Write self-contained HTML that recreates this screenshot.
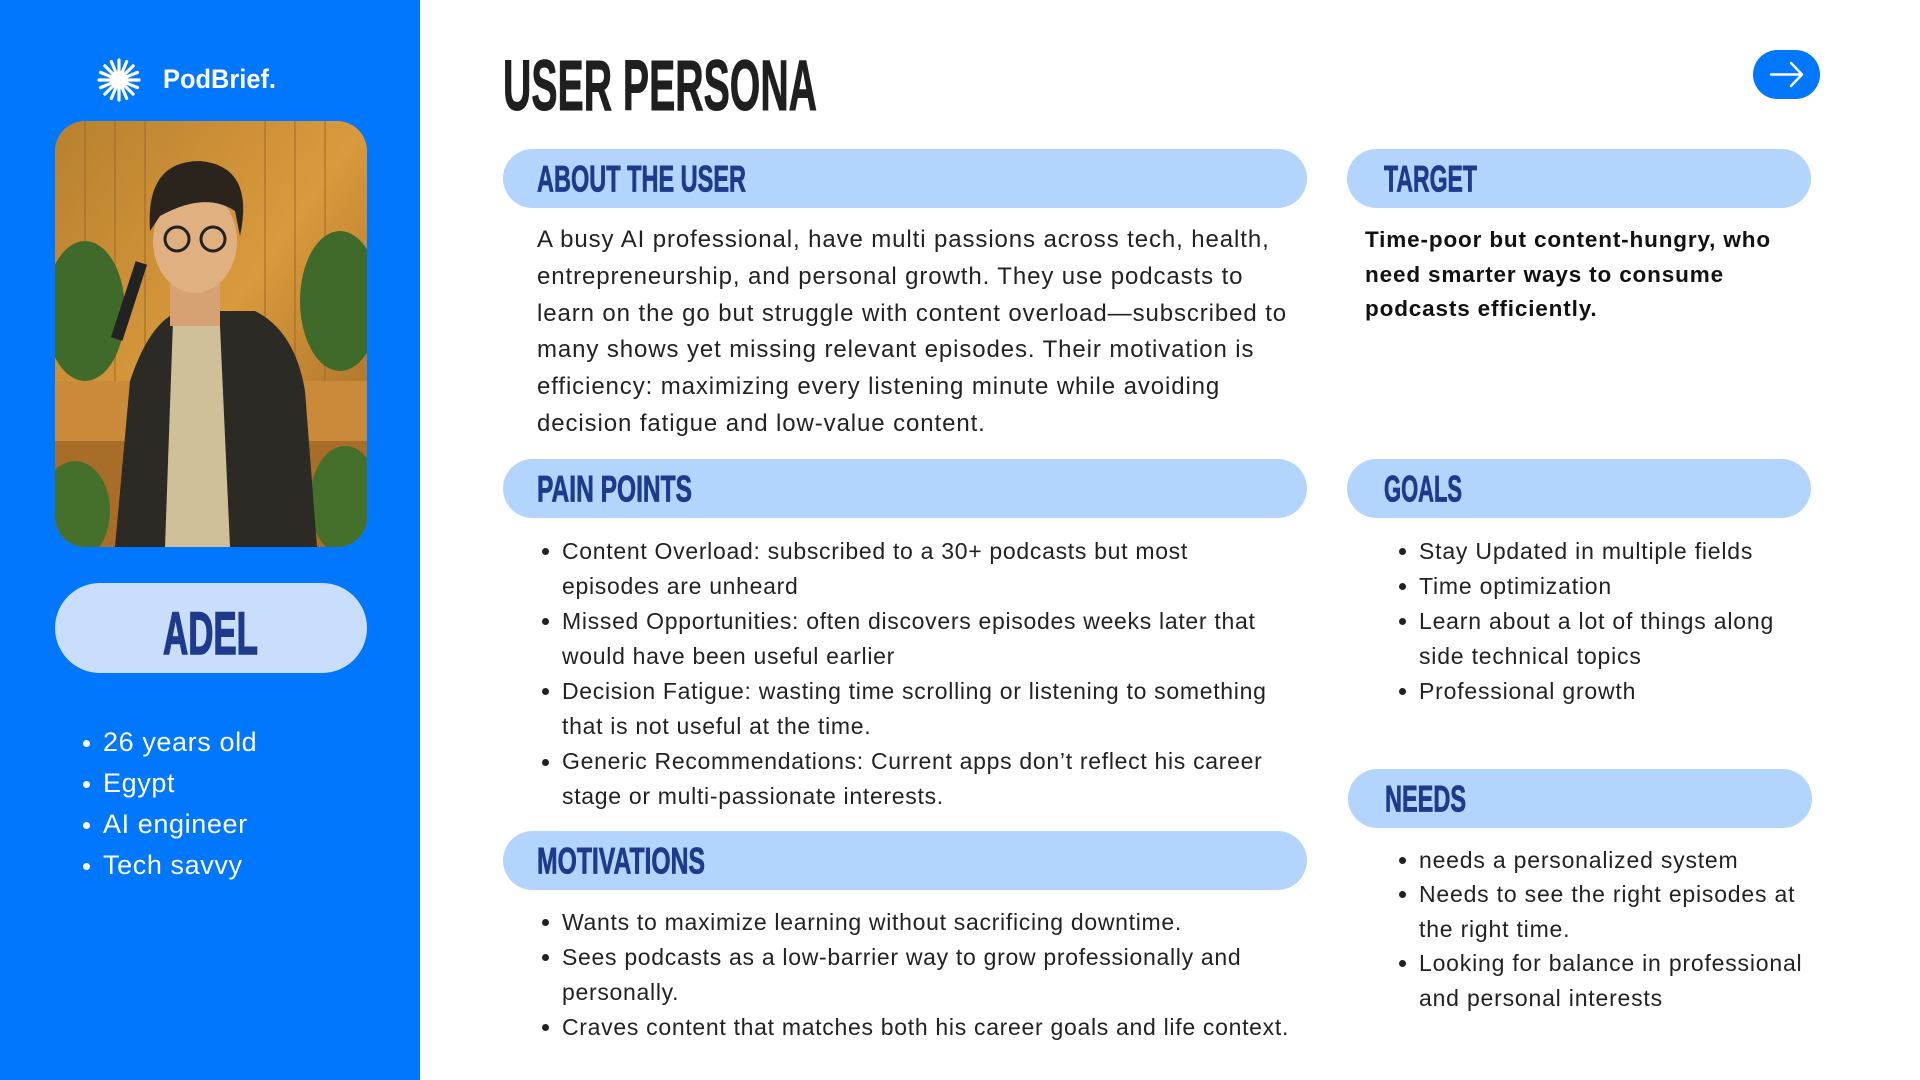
<!DOCTYPE html>
<html><head><meta charset="utf-8"><style>
*{margin:0;padding:0;box-sizing:border-box}
body{width:1920px;height:1080px;position:relative;background:#fff;overflow:hidden;font-family:"Liberation Sans",sans-serif;color:#1c1c1c}
.side{position:absolute;left:0;top:0;width:420px;height:1080px;background:#0077fd}
.abs{position:absolute}
.pill{position:absolute;height:59px;border-radius:30px;background:#b3d5fd}
.txt{position:absolute;white-space:nowrap}
ul{list-style:none}
li{position:relative}
li::before{content:"";position:absolute;left:-20px;top:50%;width:7px;height:7px;border-radius:50%;background:currentColor;margin-top:-3px}
li.c::before{display:none}
</style></head><body>
<div class="side"></div>
<svg class="abs" style="left:97px;top:58px" width="44" height="44" viewBox="-22 -22 44 44">
<g stroke="#fff" stroke-width="3.2" stroke-linecap="round">
<line x1="0" y1="-8" x2="0" y2="-20"/><line x1="0" y1="-8" x2="0" y2="-20" transform="rotate(22.5)"/><line x1="0" y1="-8" x2="0" y2="-20" transform="rotate(45)"/><line x1="0" y1="-8" x2="0" y2="-20" transform="rotate(67.5)"/><line x1="0" y1="-8" x2="0" y2="-20" transform="rotate(90)"/><line x1="0" y1="-8" x2="0" y2="-20" transform="rotate(112.5)"/><line x1="0" y1="-8" x2="0" y2="-20" transform="rotate(135)"/><line x1="0" y1="-8" x2="0" y2="-20" transform="rotate(157.5)"/><line x1="0" y1="-8" x2="0" y2="-20" transform="rotate(180)"/><line x1="0" y1="-8" x2="0" y2="-20" transform="rotate(202.5)"/><line x1="0" y1="-8" x2="0" y2="-20" transform="rotate(225)"/><line x1="0" y1="-8" x2="0" y2="-20" transform="rotate(247.5)"/><line x1="0" y1="-8" x2="0" y2="-20" transform="rotate(270)"/><line x1="0" y1="-8" x2="0" y2="-20" transform="rotate(292.5)"/><line x1="0" y1="-8" x2="0" y2="-20" transform="rotate(315)"/><line x1="0" y1="-8" x2="0" y2="-20" transform="rotate(337.5)"/>
</g><circle r="9" fill="#fff"/></svg>
<svg class="abs" style="left:0;top:0" width="420" height="700">
<text x="163" y="88" font-family="Liberation Sans" font-weight="bold" font-size="27" fill="#fff" textLength="113" lengthAdjust="spacingAndGlyphs">PodBrief.</text>
</svg>
<svg class="abs" style="left:55px;top:121px;border-radius:30px" width="312" height="426" viewBox="0 0 312 426">
<defs><linearGradient id="bg" x1="0" y1="0" x2="1" y2="1"><stop offset="0" stop-color="#b8802f"/><stop offset=".5" stop-color="#d99a3c"/><stop offset="1" stop-color="#9a6424"/></linearGradient></defs>
<rect width="312" height="426" fill="url(#bg)"/>
<g stroke="#a06a28" stroke-width="2" opacity=".5"><line x1="30" y1="0" x2="30" y2="260"/><line x1="60" y1="0" x2="60" y2="260"/><line x1="90" y1="0" x2="90" y2="260"/><line x1="210" y1="0" x2="210" y2="260"/><line x1="240" y1="0" x2="240" y2="260"/><line x1="270" y1="0" x2="270" y2="260"/></g>
<rect x="0" y="260" width="312" height="60" fill="#c98a3a"/>
<rect x="0" y="320" width="312" height="106" fill="#a96d2a"/>
<ellipse cx="30" cy="190" rx="40" ry="70" fill="#3f6a2a"/><ellipse cx="285" cy="180" rx="40" ry="70" fill="#3f6a2a"/>
<ellipse cx="20" cy="390" rx="35" ry="50" fill="#44702c"/><ellipse cx="290" cy="380" rx="35" ry="55" fill="#44702c"/>
<path d="M60 426 L75 260 Q95 200 125 190 L200 190 Q240 210 250 270 L262 426 Z" fill="#2b2a24"/>
<path d="M118 200 L165 205 L175 426 L110 426 Z" fill="#cfc09a"/>
<rect x="115" y="160" width="50" height="45" fill="#d6a274"/>
<ellipse cx="140" cy="120" rx="42" ry="52" fill="#e0b080"/>
<path d="M95 110 Q90 40 145 40 Q200 45 185 115 L180 90 Q150 70 105 95 Z" fill="#2a241c"/>
<circle cx="122" cy="118" r="12" fill="none" stroke="#222" stroke-width="3"/><circle cx="158" cy="118" r="12" fill="none" stroke="#222" stroke-width="3"/>
<rect x="68" y="140" width="12" height="80" fill="#222" transform="rotate(18 74 180)"/>
</svg>
<div class="abs" style="left:55px;top:583px;width:312px;height:90px;border-radius:45px;background:#c9defc"></div>
<svg class="abs" style="left:0;top:560px" width="420" height="120"><text x="163" y="94" font-family="Liberation Sans" font-weight="bold" font-size="60" fill="#1e3a8a" stroke="#1e3a8a" stroke-width="1.5" textLength="95" lengthAdjust="spacingAndGlyphs">ADEL</text></svg>
<ul class="txt" style="left:103px;top:722px;font-size:27px;line-height:41px;color:#fff;letter-spacing:.6px">
<li>26 years old</li><li>Egypt</li><li>AI engineer</li><li>Tech savvy</li></ul>
<svg class="abs" style="left:0;top:0" width="1920" height="1080">
<text x="503" y="110" font-family="Liberation Sans" font-weight="bold" font-size="71" fill="#1f1f1f" stroke="#1f1f1f" stroke-width="1" textLength="314" lengthAdjust="spacingAndGlyphs">USER PERSONA</text>
</svg>
<div class="abs" style="left:1753px;top:50px;width:67px;height:49px;border-radius:25px;background:#0077fd"></div>
<svg class="abs" style="left:1753px;top:50px" width="67" height="49"><g stroke="#fff" stroke-width="2.4" fill="none" stroke-linecap="round" stroke-linejoin="round"><line x1="18" y1="24.5" x2="49" y2="24.5"/><polyline points="38,13 49,24.5 38,36"/></g></svg>
<div class="pill" style="left:503px;top:149px;width:804px"></div>
<div class="pill" style="left:1347px;top:149px;width:464px"></div>
<div class="pill" style="left:503px;top:459px;width:804px"></div>
<div class="pill" style="left:1347px;top:459px;width:464px"></div>
<div class="pill" style="left:503px;top:831px;width:804px"></div>
<div class="pill" style="left:1348px;top:769px;width:464px"></div>
<svg class="abs" style="left:0;top:0" width="1920" height="1080" font-family="Liberation Sans" font-weight="bold" font-size="37" fill="#1e3a8a" stroke="#1e3a8a" stroke-width="0.8">
<text x="537" y="191.5" textLength="209" lengthAdjust="spacingAndGlyphs">ABOUT THE USER</text>
<text x="1384" y="191.5" textLength="93" lengthAdjust="spacingAndGlyphs">TARGET</text>
<text x="537" y="501.5" textLength="155" lengthAdjust="spacingAndGlyphs">PAIN POINTS</text>
<text x="1384" y="501.5" textLength="78" lengthAdjust="spacingAndGlyphs">GOALS</text>
<text x="537" y="873.5" textLength="168" lengthAdjust="spacingAndGlyphs">MOTIVATIONS</text>
<text x="1385" y="811.5" textLength="81" lengthAdjust="spacingAndGlyphs">NEEDS</text>
</svg>
<div class="txt" style="left:537px;top:222px;font-size:24px;line-height:36.8px;color:#222;letter-spacing:.9px">
A busy AI professional, have multi passions across tech, health,<br>entrepreneurship, and personal growth. They use podcasts to<br>learn on the go but struggle with content overload—subscribed to<br>many shows yet missing relevant episodes. Their motivation is<br>efficiency: maximizing every listening minute while avoiding<br>decision fatigue and low-value content.</div>
<div class="txt" style="left:1365px;top:223px;font-size:22.5px;line-height:34.5px;font-weight:bold;color:#111;letter-spacing:.85px">
Time-poor but content-hungry, who<br>need smarter ways to consume<br>podcasts efficiently.</div>
<ul class="txt" style="left:562px;top:533.5px;font-size:23px;line-height:35.1px;color:#222;letter-spacing:.7px">
<li>Content Overload: subscribed to a 30+ podcasts but most</li><li class="c">episodes are unheard</li>
<li>Missed Opportunities: often discovers episodes weeks later that</li><li class="c">would have been useful earlier</li>
<li>Decision Fatigue: wasting time scrolling or listening to something</li><li class="c">that is not useful at the time.</li>
<li>Generic Recommendations: Current apps don’t reflect his career</li><li class="c">stage or multi-passionate interests.</li></ul>
<ul class="txt" style="left:1419px;top:533.5px;font-size:23px;line-height:35.1px;color:#222;letter-spacing:.8px">
<li>Stay Updated in multiple fields</li><li>Time optimization</li><li>Learn about a lot of things along</li><li class="c">side technical topics</li><li>Professional growth</li></ul>
<ul class="txt" style="left:562px;top:904.5px;font-size:23px;line-height:35.1px;color:#222;letter-spacing:.7px">
<li>Wants to maximize learning without sacrificing downtime.</li><li>Sees podcasts as a low-barrier way to grow professionally and</li><li class="c">personally.</li><li>Craves content that matches both his career goals and life context.</li></ul>
<ul class="txt" style="left:1419px;top:842.5px;font-size:23px;line-height:34.5px;color:#222;letter-spacing:.8px">
<li>needs a personalized system</li><li>Needs to see the right episodes at</li><li class="c">the right time.</li><li>Looking for balance in professional</li><li class="c">and personal interests</li></ul>
</body></html>
